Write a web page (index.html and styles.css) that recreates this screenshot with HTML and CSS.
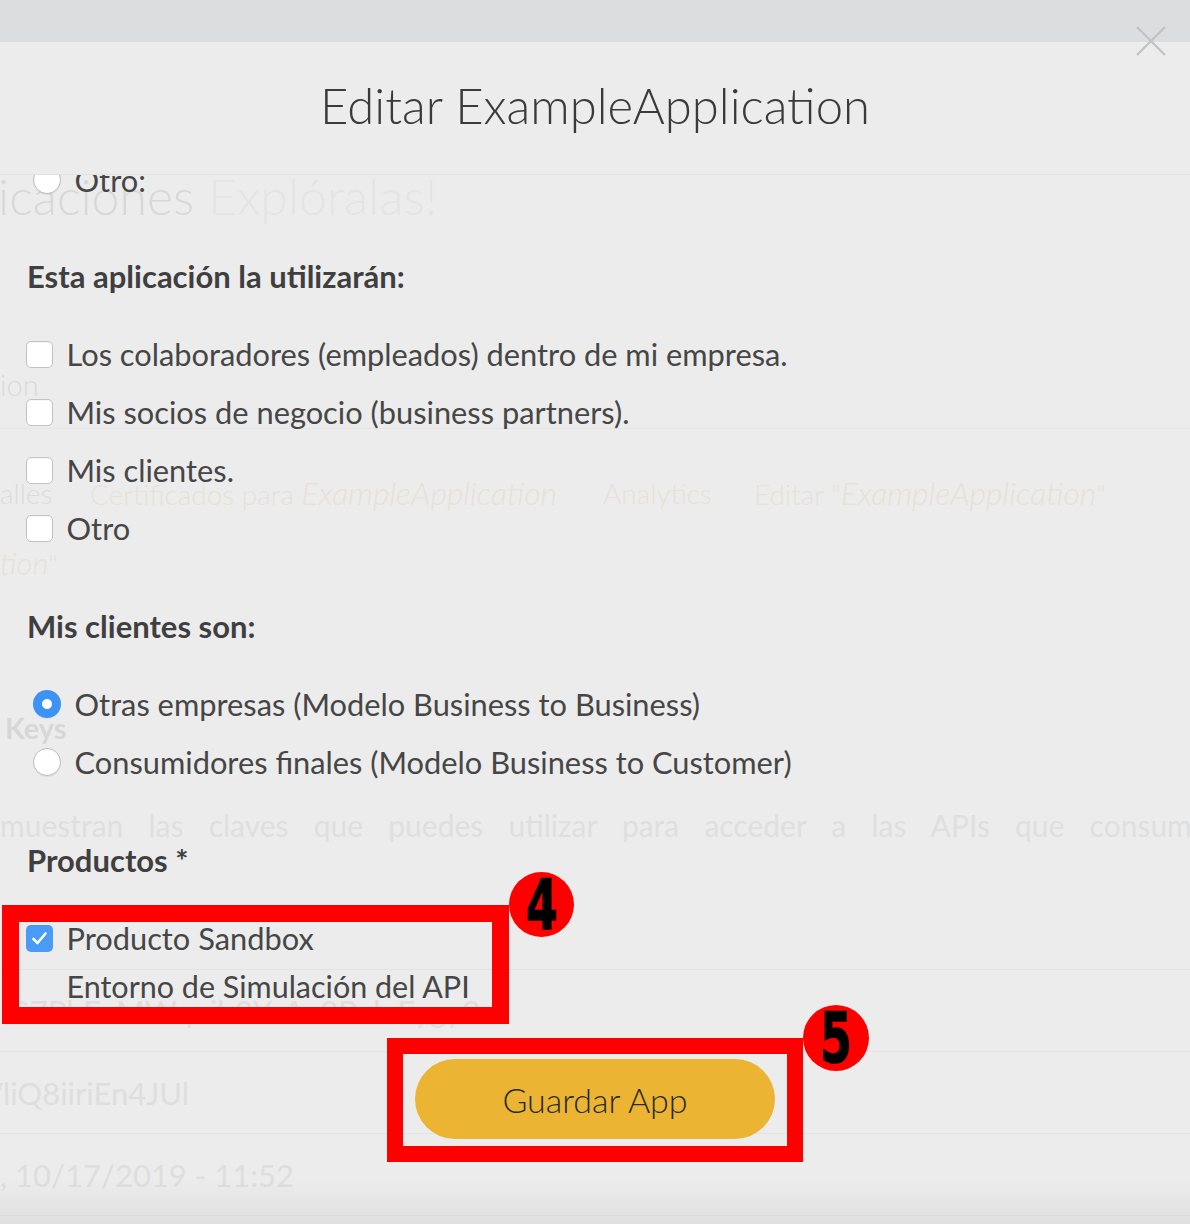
FILE: index.html
```html
<!DOCTYPE html>
<html lang="es">
<head>
<meta charset="utf-8">
<title>Editar ExampleApplication</title>
<link rel="stylesheet" href="styles.css">
</head>
<body>
<div class="page">
  <h1 class="bg-hero"><span class="dim">icaciones</span> <span class="dimmer">Explóralas!</span></h1>
  <div class="bg-sub">ion</div>
  <div class="bg-rule"></div>
  <nav class="bg-tabs">
    <span class="tab tab-a">alles</span>
    <span class="tab tab-b">Certificados para <em>ExampleApplication</em></span>
    <span class="tab tab-c">Analytics</span>
    <span class="tab tab-d">Editar "<em>ExampleApplication</em>"</span>
  </nav>
  <div class="bg-tabline"><em>tion</em>"</div>
  <h2 class="bg-keys">Keys</h2>
  <p class="bg-para">muestran las claves que puedes utilizar para acceder a las APIs que consum</p>
  <div class="bg-table">
    <div class="bg-row">lG7PhEaMWqnib3YcAe3PvluFygy3</div>
    <div class="bg-row"><span class="bg-cut">VliQ8iiriEn4JUl</span></div>
    <div class="bg-row">, 10/17/2019 - 11:52</div>
  </div>
</div>

<div class="overlay">
  <div class="overlay-top"></div>
  <section class="modal">
    <header class="modal-head">
      <h2 class="modal-title">Editar ExampleApplication</h2>
      <button class="close" type="button" aria-label="Cerrar">
        <svg width="30" height="30" viewBox="0 0 30 30"><path d="M1 1 L29 29 M29 1 L1 29" stroke="#c2c2c2" stroke-width="2.2" fill="none"/></svg>
      </button>
    </header>
    <div class="modal-body">
      <form class="form">
        <label class="opt opt-radio"><span class="radio"></span>Otro:</label>

        <div class="group group-first">
          <div class="group-title">Esta aplicación la utilizarán:</div>
          <label class="opt"><span class="check"></span>Los colaboradores (empleados) dentro de mi empresa.</label>
          <label class="opt"><span class="check"></span>Mis socios de negocio (business partners).</label>
          <label class="opt"><span class="check"></span>Mis clientes.</label>
          <label class="opt"><span class="check"></span>Otro</label>
        </div>

        <div class="group">
          <div class="group-title">Mis clientes son:</div>
          <label class="opt opt-radio"><span class="radio radio-on"></span>Otras empresas (Modelo Business to Business)</label>
          <label class="opt opt-radio"><span class="radio"></span>Consumidores finales (Modelo Business to Customer)</label>
        </div>

        <div class="group">
          <div class="group-title">Productos *</div>
          <label class="opt"><span class="check check-on"><svg width="27" height="27" viewBox="0 0 27 27"><path d="M7.5 14 L11.5 18 L19.5 8.5" stroke="#fff" stroke-width="2.6" fill="none" stroke-linecap="round" stroke-linejoin="round"/></svg></span>Producto Sandbox</label>
          <div class="opt-desc">Entorno de Simulación del API</div>
        </div>

        <div class="actions">
          <button class="save" type="button">Guardar App</button>
        </div>
      </form>
    </div>
  </section>

  <div class="mark mark-4"></div>
  <div class="badge badge-4"><span class="badge-num">4</span></div>
  <div class="mark mark-5"></div>
  <div class="badge badge-5"><span class="badge-num">5</span></div>
</div>
</body>
</html>
```

FILE: styles.css
```css
html, body {
  margin: 0;
  padding: 0;
}
body {
  width: 1190px;
  height: 1224px;
  overflow: hidden;
  position: relative;
  background: #ececec;
  font-family: Lato, "Open Sans", "Liberation Sans", sans-serif;
  color: #474747;
}

/* ---------- faded background page ---------- */
.page {
  padding-top: 167px;
}
.bg-hero {
  margin: 0 0 0 -2px;
  font-size: 50px;
  font-weight: 300;
  line-height: 58px;
  white-space: nowrap;
}
.bg-hero .dim { color: #d8d8d8; }
.bg-hero .dimmer { color: #e4e4e4; }
.bg-sub {
  margin-top: 140px;
  font-size: 29px;
  font-weight: 300;
  line-height: 40px;
  color: #dadada;
}
.bg-rule {
  margin-top: 23px;
  height: 1px;
  background: #e5e5e5;
}
.bg-tabs {
  margin-top: 44px;
  display: flex;
  font-size: 28px;
  font-weight: 300;
  line-height: 40px;
  white-space: nowrap;
}
.bg-tabs em { font-size: 1.14em; }
.tab { flex: none; color: #e6e1d9; }
.tab-a { width: 90px; color: #dcdcdc; }
.tab-b { width: 513px; }
.tab-c { width: 151px; }
.bg-tabline {
  margin-top: 30px;
  font-size: 28px;
  font-weight: 300;
  line-height: 40px;
  color: #e6e1d9;
}
.bg-tabline em { font-size: 1.1em; }
.bg-keys {
  margin: 124px 0 0;
  padding-left: 5px;
  font-size: 29px;
  font-weight: 700;
  line-height: 40px;
  color: #d7d7d7;
}
.bg-para {
  margin: 57px 0 0;
  font-size: 30px;
  line-height: 40px;
  color: #dfdfdf;
  white-space: nowrap;
  word-spacing: 17.5px;
}
.bg-table {
  margin-top: 124px;
  border-bottom: 1px solid #e4e4e4;
}
.bg-row {
  height: 81px;
  border-top: 1px solid #e4e4e4;
  display: flex;
  align-items: center;
  font-size: 31px;
  color: #dedede;
  white-space: nowrap;
}
.bg-cut { margin-left: -18px; }

/* ---------- modal overlay ---------- */
.overlay {
  position: absolute;
  inset: 0;
  display: flex;
  flex-direction: column;
}
.overlay-top {
  height: 42px;
  flex: none;
  background: #dcdddf;
}
.modal {
  flex: 1;
  position: relative;
  display: flex;
  flex-direction: column;
  background: linear-gradient(to bottom, rgba(0,0,0,0) calc(100% - 46px), rgba(0,0,0,0.05));
}
.modal-head {
  height: 133px;
  flex: none;
  border-bottom: 1px solid #e2e2e2;
  background: #ececec;
  display: flex;
  align-items: center;
  justify-content: center;
  padding-bottom: 6px;
  box-sizing: border-box;
}
.modal-title {
  margin: 0;
  font-size: 49px;
  font-weight: 300;
  line-height: 60px;
  color: #3a3a3a;
}
.close {
  position: absolute;
  top: -16px;
  right: 24px;
  width: 30px;
  height: 30px;
  padding: 0;
  border: 0;
  background: none;
  display: block;
}
.close svg { display: block; }

.modal-body {
  flex: 1;
  overflow: hidden;
}
.form {
  margin-top: -24px;
  padding-left: 26px;
}
.opt {
  display: flex;
  align-items: center;
  gap: 13.5px;
  height: 58px;
  font-size: 30.8px;
  color: #464646;
  white-space: nowrap;
}
.check {
  flex: none;
  width: 27px;
  height: 27px;
  box-sizing: border-box;
  border: 1px solid #c2c2c2;
  border-radius: 5px;
  background: #fff;
  box-shadow: inset 0 1px 1px rgba(0,0,0,0.04);
}
.check-on {
  border: 0;
  background: #4a9bf5;
}
.check-on svg { display: block; }
.opt-radio .radio { margin-left: 7px; }
.radio {
  flex: none;
  width: 28px;
  height: 28px;
  box-sizing: border-box;
  border-radius: 50%;
  border: 1px solid #bdbdbd;
  background: #fff;
  box-shadow: 0 1px 1px rgba(0,0,0,0.06);
}
.radio-on {
  border: 0;
  background: radial-gradient(circle, #fff 0 4.5px, #3d92f5 5.5px);
}
.group { margin-top: 40px; }
.group-first { margin-top: 38px; }
.group-title {
  height: 58px;
  line-height: 58px;
  margin-bottom: 20px;
  padding-left: 1px;
  font-size: 31px;
  font-weight: 700;
  color: #3f3f3f;
  white-space: nowrap;
}
.opt-desc {
  padding-left: 40.5px;
  font-size: 30.5px;
  line-height: 38px;
  color: #464646;
}
.actions {
  margin-top: 54px;
  display: flex;
  justify-content: center;
  padding-right: 26px;
}
.save {
  width: 360px;
  height: 80px;
  border: 0;
  border-radius: 40px;
  background: #ebb432;
  font-family: Lato, "Open Sans", sans-serif;
  font-size: 34px;
  font-weight: 300;
  color: #2a2a2a;
  padding: 0;
}

/* ---------- annotations ---------- */
.mark {
  position: absolute;
  box-sizing: border-box;
  border: 17px solid #ff0000;
}
.mark-4 { left: 2px; top: 905px; width: 507px; height: 119px; }
.mark-5 { left: 387px; top: 1038px; width: 416px; height: 124px; border-width: 16px; }
.badge {
  position: absolute;
  width: 65px;
  height: 65px;
  border-radius: 50%;
  background: #ff0000;
  display: flex;
  align-items: center;
  justify-content: center;
}
.badge-4 { left: 509px; top: 872px; }
.badge-5 { left: 803px; top: 1005px; width: 66px; height: 66px; }
.badge-num {
  font-family: "DejaVu Sans Condensed", "DejaVu Sans", sans-serif;
  font-weight: 700;
  font-size: 70px;
  line-height: 1;
  color: #000;
  -webkit-text-stroke: 1.5px #000;
  transform: scaleX(0.72);
}
```
